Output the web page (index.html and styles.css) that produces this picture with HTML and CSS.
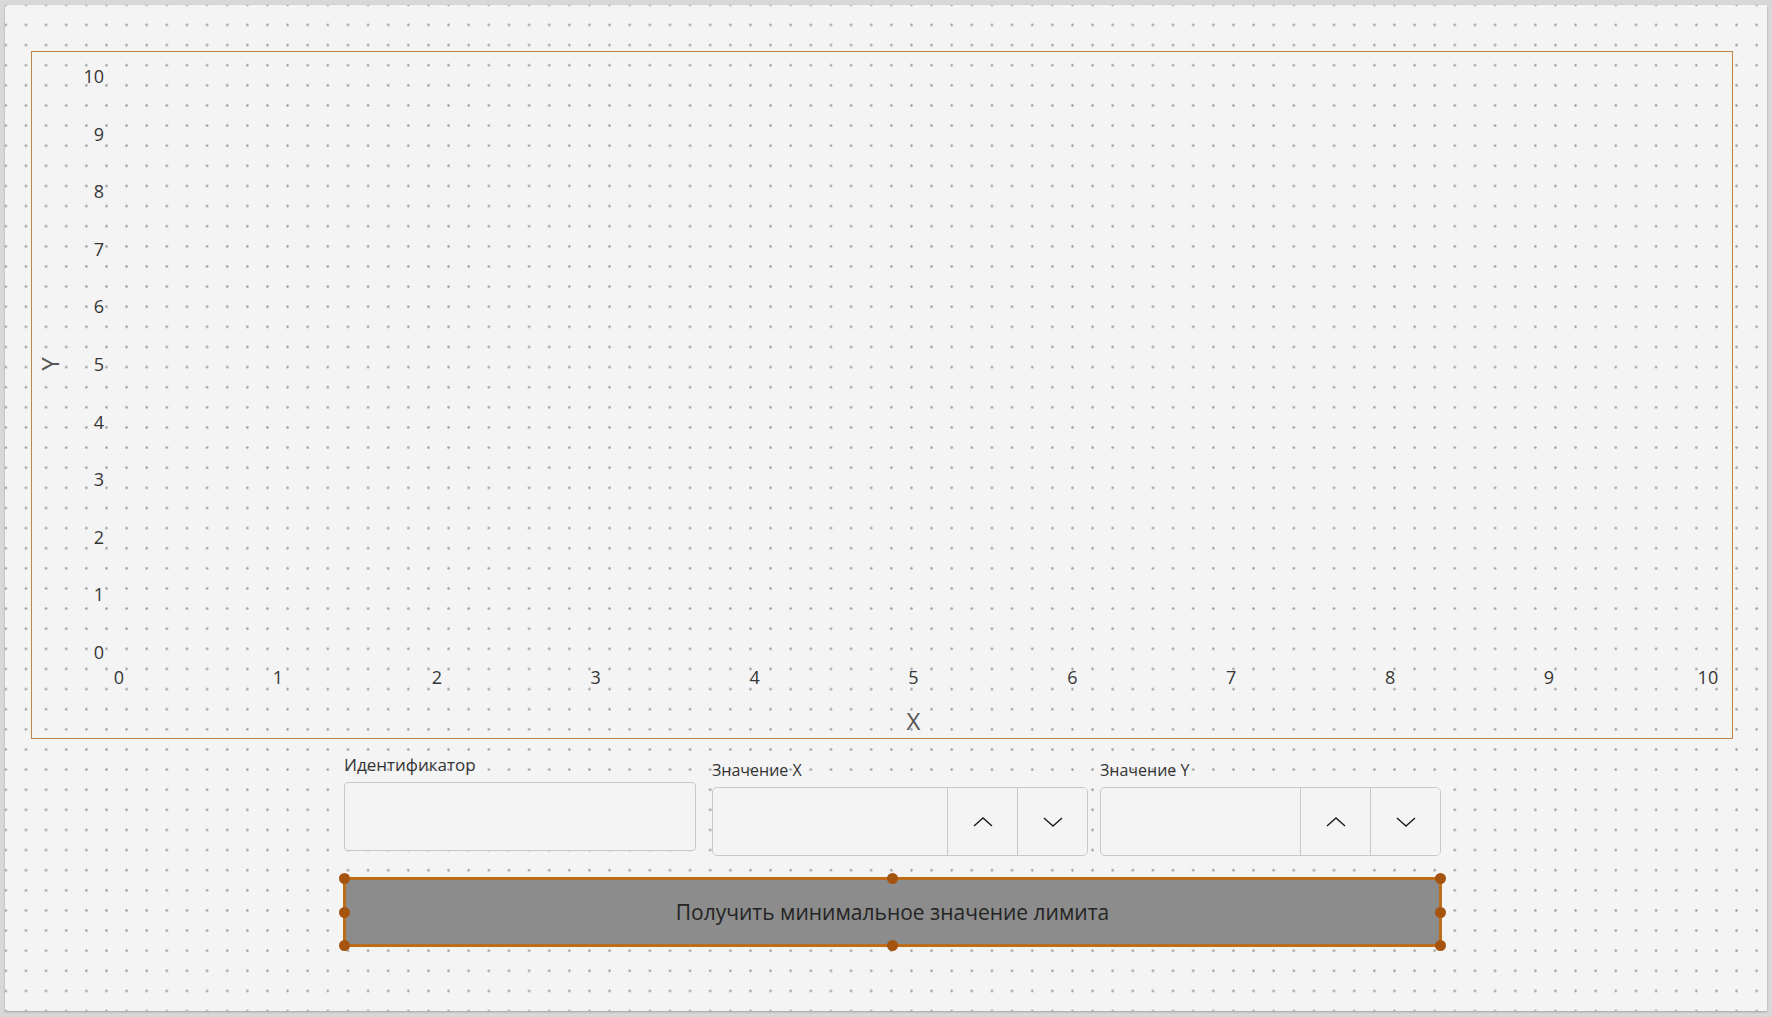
FILE: index.html
```html
<!DOCTYPE html>
<html lang="ru">
    <head>
        <meta charset="utf-8">
        <link rel="stylesheet" href="styles.css">
    </head>
    <body>
        <div class="designer">
            <!-- график -->
            <div class="chart">
                <div class="chart-body">
                    <div class="axis-y"><span>Y</span></div>
                    <ul class="y-ticks">
                        <li>10</li><li>9</li><li>8</li><li>7</li><li>6</li><li>5</li>
                        <li>4</li><li>3</li><li>2</li><li>1</li><li>0</li>
                    </ul>
                </div>
                <div class="x-axis">
                    <ul class="x-ticks">
                        <li>0</li><li>1</li><li>2</li><li>3</li><li>4</li><li>5</li>
                        <li>6</li><li>7</li><li>8</li><li>9</li><li>10</li>
                    </ul>
                    <div class="axis-x">X</div>
                </div>
            </div>

            <!-- поля ввода -->
            <div class="form">
                <div class="field field-id">
                    <label>Идентификатор</label>
                    <div class="textbox"></div>
                </div>
                <div class="field field-spin spin-x">
                    <label>Значение X</label>
                    <div class="spin">
                        <div class="spin-input"></div>
                        <button class="spin-btn"><svg viewBox="0 0 20 10" width="20" height="10"><polyline points="1,9 10,1 19,9"/></svg></button>
                        <button class="spin-btn"><svg viewBox="0 0 20 10" width="20" height="10"><polyline points="1,1 10,9 19,1"/></svg></button>
                    </div>
                </div>
                <div class="field field-spin spin-y">
                    <label>Значение Y</label>
                    <div class="spin">
                        <div class="spin-input"></div>
                        <button class="spin-btn"><svg viewBox="0 0 20 10" width="20" height="10"><polyline points="1,9 10,1 19,9"/></svg></button>
                        <button class="spin-btn"><svg viewBox="0 0 20 10" width="20" height="10"><polyline points="1,1 10,9 19,1"/></svg></button>
                    </div>
                </div>
            </div>

            <!-- выделенная кнопка с маркерами -->
            <div class="action">
                <button class="action-btn">Получить минимальное значение лимита</button>
                <span class="handle tl"></span>
                <span class="handle tm"></span>
                <span class="handle tr"></span>
                <span class="handle ml"></span>
                <span class="handle mr"></span>
                <span class="handle bl"></span>
                <span class="handle bm"></span>
                <span class="handle br"></span>
            </div>
        </div>
    </body>
</html>
```

FILE: styles.css
```css
*{margin:0;padding:0;box-sizing:border-box;}
ul{list-style:none;}
html,body{height:100%;}
body{background:#d8d8d8;overflow:hidden;font-family:"Open Sans","Noto Sans",sans-serif;color:#333;}

/* холст дизайнера с точечной сеткой */
.designer{
    margin:5px 0 0 5px;width:1762px;height:1006px;
    background-color:#f4f4f4;
    background-image:radial-gradient(circle,#a4a4a4 0.9px,rgba(170,170,170,0) 1.6px);
    background-size:20.14px 20.14px;
    background-position:10.9px 9.9px;
    box-shadow:0 1px 2px rgba(0,0,0,.25);
    padding:46px 0 0 26px;
}

.chart{width:1702px;height:688px;border:1px solid #c3834a;}
.chart-body{display:flex;margin-top:12px;height:600px;}
.axis-y{width:36px;display:flex;align-items:center;justify-content:center;}
.axis-y span{display:block;transform:rotate(-90deg);font-size:24px;line-height:30px;color:#555;}
.y-ticks{width:36px;display:flex;flex-direction:column;justify-content:space-between;text-align:right;}
.y-ticks li,.x-ticks li{font-size:18px;line-height:24px;color:#363636;}

.x-axis{margin:1px 0 0 72px;width:1619px;}
.x-ticks{display:flex;justify-content:space-between;}
.x-ticks li{width:30px;text-align:center;}
.axis-x{margin-top:17px;text-align:center;font-size:24px;line-height:30px;color:#555;}

/* поля */
.form{display:flex;align-items:flex-start;margin:15px 0 0 313px;}
.field label{display:block;line-height:22px;color:#333;}
.field-id{width:352px;}
.field-id label{font-size:17px;margin-bottom:6px;}
.textbox{height:69px;border:1px solid #c8c8c8;border-radius:4px;background:#f4f4f4;}

.field-spin{margin-top:5px;}
.field-spin label{font-size:16px;margin-bottom:6px;}
.spin-x{width:376px;margin-left:16px;}
.spin-y{width:341px;margin-left:12px;}
.spin{display:flex;height:69px;border:1px solid #c8c8c8;border-radius:5px;background:#f4f4f4;overflow:hidden;}
.spin-input{flex:1;}
.spin-btn{width:70px;border:0;border-left:1px solid #c8c8c8;background:#f4f4f4;display:flex;align-items:center;justify-content:center;}
.spin-btn svg{fill:none;stroke:#1c1c1c;stroke-width:1.4;}

/* кнопка */
.action{position:relative;width:1099px;height:70px;margin:21px 0 0 312px;}
.action-btn{width:100%;height:100%;border:3px solid #bd6c1c;background:#8c8c8c;
    font-family:inherit;font-size:21px;color:#242424;}
.handle{position:absolute;width:11px;height:11px;border-radius:50%;background:#a5540f;}
.tl,.tm,.tr{top:-4px;}
.bl,.bm,.br{bottom:-4px;}
.ml,.mr{top:29.5px;}
.tl,.ml,.bl{left:-4px;}
.tr,.mr,.br{right:-4px;}
.tm,.bm{left:544px;}
```
